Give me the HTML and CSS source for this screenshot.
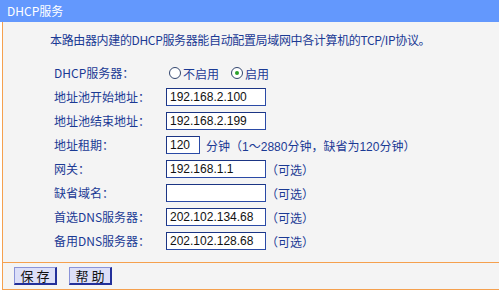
FILE: index.html
```html
<!DOCTYPE html>
<html lang="zh-CN">
<head>
<meta charset="utf-8">
<title>DHCP服务</title>
<link rel="stylesheet" href="styles.css">
</head>
<body>
<div class="header">DHCP服务</div>
<div class="panel">
  <div class="main">
    <p class="intro">本路由器内建的DHCP服务器能自动配置局域网中各计算机的TCP/IP协议。</p>
    <div class="form">
      <div class="label">DHCP服务器：</div>
      <div class="field">
        <span class="radio"></span><span class="rtext">不启用</span>
        <span class="radio checked"></span><span class="rtext">启用</span>
      </div>

      <div class="label">地址池开始地址：</div>
      <div class="field"><span class="input">192.168.2.100</span></div>

      <div class="label">地址池结束地址：</div>
      <div class="field"><span class="input">192.168.2.199</span></div>

      <div class="label">地址租期：</div>
      <div class="field"><span class="input short">120</span><span class="note">分钟（<span class="num">1</span>～<span class="num">2880</span>分钟，缺省为<span class="num">120</span>分钟）</span></div>

      <div class="label">网关：</div>
      <div class="field"><span class="input">192.168.1.1</span><span class="opt">（可选）</span></div>

      <div class="label">缺省域名：</div>
      <div class="field"><span class="input"></span><span class="opt">（可选）</span></div>

      <div class="label">首选DNS服务器：</div>
      <div class="field"><span class="input">202.102.134.68</span><span class="opt">（可选）</span></div>

      <div class="label">备用DNS服务器：</div>
      <div class="field"><span class="input">202.102.128.68</span><span class="opt">（可选）</span></div>
    </div>
  </div>
  <div class="buttons">
    <span class="btn">保 存</span>
    <span class="btn">帮 助</span>
  </div>
</div>
</body>
</html>
```
FILE: styles.css
```css
html, body {
  margin: 0;
  padding: 0;
  background: #ffffff;
}
body {
  width: 499px;
  font-family: "Noto Sans CJK SC", "Liberation Sans", sans-serif;
  font-size: 12px;
  color: #1b3a94;
}
.header {
  height: 22px;
  line-height: 22px;
  background: #6398fd;
  color: #ffffff;
  padding-left: 7px;
  font-size: 12px;
}
.panel {
  margin-left: 2px;
  border-left: 1px solid #f5a04e;
  border-bottom: 1px solid #f5a04e;
  background: #f4f4f4;
}
.main {
  padding: 6px 0 9px 47px;
  border-bottom: 1px solid #f5a04e;
}
.intro {
  margin: 0 0 9px 0;
  height: 24px;
  line-height: 24px;
  letter-spacing: -0.35px;
}
.form {
  display: grid;
  grid-template-columns: 112px auto;
  grid-auto-rows: 24px;
  padding-left: 4px;
}
.label {
  line-height: 24px;
  white-space: nowrap;
}
.field {
  display: flex;
  align-items: center;
  white-space: nowrap;
}
.input {
  box-sizing: border-box;
  width: 100px;
  height: 18px;
  line-height: 16px;
  background: #ffffff;
  border: 1px solid #2a4aa6;
  border-top-color: #1b3584;
  border-left-color: #1b3584;
  padding-left: 3px;
  font-family: "Liberation Sans", sans-serif;
  font-size: 12px;
  color: #111111;
}
.input.short {
  width: 34px;
}
.note {
  margin-left: 6px;
}
.num {
  font-family: "Liberation Sans", sans-serif;
}
.opt {
  margin-left: 0;
}
.radio {
  box-sizing: border-box;
  width: 12px;
  height: 12px;
  border: 1px solid #33466e;
  border-radius: 50%;
  background: #ffffff;
  margin-left: 3px;
  position: relative;
}
.radio.checked {
  margin-left: 12px;
}
.radio.checked::after {
  content: "";
  position: absolute;
  left: 3px;
  top: 3px;
  width: 4px;
  height: 4px;
  border-radius: 50%;
  background: #2aa12a;
}
.rtext {
  margin-left: 2px;
}
.buttons {
  height: 26px;
  display: flex;
  align-items: center;
  padding-left: 11px;
  gap: 12px;
}
.btn {
  box-sizing: border-box;
  width: 43px;
  height: 18px;
  line-height: 15px;
  text-align: center;
  background: #dcdff8;
  border: 1px solid #8a93d8;
  border-right: 2px solid #23309a;
  border-bottom: 2px solid #23309a;
  color: #111111;
  font-size: 13px;
}
```
